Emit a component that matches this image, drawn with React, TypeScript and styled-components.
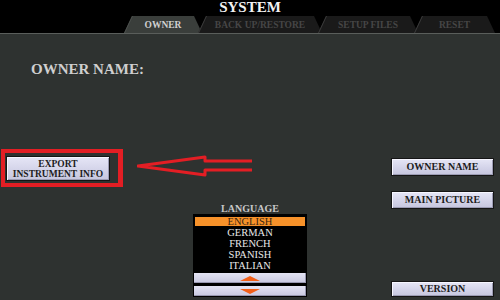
import React from "react";
import styled, { createGlobalStyle } from "styled-components";

const GlobalStyle = createGlobalStyle`
  html, body {
    margin: 0;
    padding: 0;
    background: #2e3230;
  }
  #root {
    width: 500px;
    height: 300px;
    overflow: hidden;
  }
`;

const Screen = styled.div`
  display: flex;
  flex-direction: column;
  width: 500px;
  height: 300px;
  background: #2e3230;
  font-family: "Liberation Serif", "Times New Roman", serif;
`;

const Header = styled.div`
  display: flex;
  flex-direction: column;
  align-items: stretch;
  height: 33px;
  background: #000;
  border-bottom: 1px solid #5a5e5b;
`;

const Title = styled.div`
  text-align: center;
  font-size: 15px;
  line-height: 14px;
  font-weight: 700;
  color: #f2f2f2;
`;

const TabRow = styled.div`
  display: flex;
  flex-direction: row;
  margin-top: 2px;
  padding-left: 124px;
`;

const Tab = styled.div<{ $width: number; $active?: boolean }>`
  position: relative;
  display: flex;
  align-items: center;
  justify-content: center;
  width: ${(p) => p.$width}px;
  height: 17px;
  margin-left: -4px;
  margin-bottom: ${(p) => (p.$active ? "-1px" : "0")};
  padding-top: 1px;
  box-sizing: border-box;
  background: ${(p) => (p.$active ? "#3a3e3b" : "#1a1a1a")};
  clip-path: polygon(0 100%, 8px 0, calc(100% - 8px) 0, 100% 100%);
  font-size: 9.5px;
  font-weight: 700;
  color: ${(p) => (p.$active ? "#d0d0d0" : "#464646")};

  &:first-child {
    margin-left: 0;
  }

  &::before {
    content: "";
    position: absolute;
    left: 3px;
    top: 0;
    bottom: 0;
    width: 1.5px;
    background: ${(p) => (p.$active ? "#4c504d" : "#3c3c3c")};
    transform: skewX(-25deg);
  }
`;

const Content = styled.div`
  display: flex;
  flex-direction: column;
  flex: 1;
`;

const Heading = styled.div`
  margin: 28px 0 0 31px;
  font-size: 15px;
  line-height: 15px;
  font-weight: 700;
  color: #cfcfcf;
`;

const Body = styled.div`
  display: grid;
  grid-template-columns: 192px 114px 1fr 103px;
  grid-template-rows: 38px 110px;
  margin-top: 72px;
  padding: 0 6px 0 1px;
`;

const ExportRow = styled.div`
  grid-column: 1 / 3;
  grid-row: 1;
  display: flex;
  flex-direction: row;
  align-items: flex-start;
`;

const RedFrame = styled.div`
  display: flex;
  width: 122px;
  height: 38px;
  box-sizing: border-box;
  border: 4px solid #e31e24;
  border-right-width: 5px;
  padding: 3px 8px 2px 1px;
`;

const PanelButton = styled.div<{ $height?: number }>`
  display: flex;
  align-items: center;
  justify-content: center;
  flex: 0 0 auto;
  height: ${(p) => (p.$height ? `${p.$height}px` : "auto")};
  box-sizing: border-box;
  border: 1px solid #151515;
  background: linear-gradient(180deg, #e6e6f6 0%, #d2d2e8 60%, #c6c6de 100%);
  box-shadow: inset 1px 1px 0 #f6f6ff, inset -1px -1px 0 #9c9cb4;
  font-size: 10px;
  font-weight: 700;
  color: #1c1c1c;
  text-align: center;
  line-height: 10px;
  white-space: nowrap;
`;

const ExportButton = styled(PanelButton)`
  flex: 1;
  flex-direction: column;
  font-size: 9.5px;
  line-height: 10px;
`;

const Arrow = styled.svg`
  margin: 6px 0 0 14px;
  flex: 0 0 auto;
`;

const RightColumn = styled.div`
  grid-column: 4;
  grid-row: 1 / 3;
  display: flex;
  flex-direction: column;
  padding-top: 9px;
  gap: 15px;
`;

const VersionButton = styled(PanelButton)`
  margin-top: auto;
`;

const Language = styled.div`
  grid-column: 2;
  grid-row: 2;
  display: flex;
  flex-direction: column;
  align-items: stretch;
  padding-top: 16px;
`;

const LanguageLabel = styled.div`
  text-align: center;
  font-size: 10px;
  line-height: 11px;
  font-weight: 700;
  color: #c8c8c8;
`;

const ListBox = styled.div`
  display: flex;
  flex-direction: column;
  background: #000;
  padding: 2px 1px 1px 1px;
`;

const ListItem = styled.div<{ $selected?: boolean }>`
  height: 9px;
  margin: 1px 1px;
  display: flex;
  align-items: center;
  justify-content: center;
  background: ${(p) => (p.$selected ? "#f7922a" : "transparent")};
  color: ${(p) => (p.$selected ? "#3a2610" : "#e8e8e8")};
  font-size: 10.5px;
  line-height: 9px;
`;

const ScrollButton = styled.div<{ $gap: number }>`
  display: flex;
  align-items: center;
  justify-content: center;
  height: 10px;
  margin-top: ${(p) => p.$gap}px;
  background: linear-gradient(180deg, #e4e4f4 0%, #c8c8e0 100%);
  box-shadow: inset -1px -1px 0 #9898b0;
`;

const Triangle = styled.div<{ $down?: boolean }>`
  width: 0;
  height: 0;
  border-left: 10px solid transparent;
  border-right: 10px solid transparent;
  ${(p) =>
    p.$down
      ? "border-top: 5px solid #f2601a;"
      : "border-bottom: 5px solid #f2601a;"}
`;

const tabs = [
  { label: "OWNER", width: 78, active: true },
  { label: "BACK UP/RESTORE", width: 124 },
  { label: "SETUP FILES", width: 100 },
  { label: "RESET", width: 81 },
];

const languages = ["ENGLISH", "GERMAN", "FRENCH", "SPANISH", "ITALIAN"];

const App = () => {
  return (
    <>
      <GlobalStyle />
      <Screen>
        <Header>
          <Title>SYSTEM</Title>
          <TabRow>
            {tabs.map((t) => (
              <Tab key={t.label} $width={t.width} $active={t.active}>
                {t.label}
              </Tab>
            ))}
          </TabRow>
        </Header>
        <Content>
          <Heading>OWNER NAME:</Heading>
          <Body>
            <ExportRow>
              <RedFrame>
                <ExportButton>
                  <span>EXPORT</span>
                  <span>INSTRUMENT INFO</span>
                </ExportButton>
              </RedFrame>
              <Arrow width="116" height="22" viewBox="0 0 116 22">
                <path
                  d="M115 6 L68 6 L68 2 L1 11 L68 20 L68 15 L115 15"
                  fill="none"
                  stroke="#e31e24"
                  strokeWidth="3"
                  strokeLinejoin="round"
                />
              </Arrow>
            </ExportRow>
            <Language>
              <LanguageLabel>LANGUAGE</LanguageLabel>
              <ListBox>
                {languages.map((l, i) => (
                  <ListItem key={l} $selected={i === 0}>
                    {l}
                  </ListItem>
                ))}
                <ScrollButton $gap={2}>
                  <Triangle />
                </ScrollButton>
                <ScrollButton $gap={3}>
                  <Triangle $down />
                </ScrollButton>
              </ListBox>
            </Language>
            <RightColumn>
              <PanelButton $height={18}>OWNER NAME</PanelButton>
              <PanelButton $height={18}>MAIN PICTURE</PanelButton>
              <VersionButton $height={16}>VERSION</VersionButton>
            </RightColumn>
          </Body>
        </Content>
      </Screen>
    </>
  );
};

export default App;
